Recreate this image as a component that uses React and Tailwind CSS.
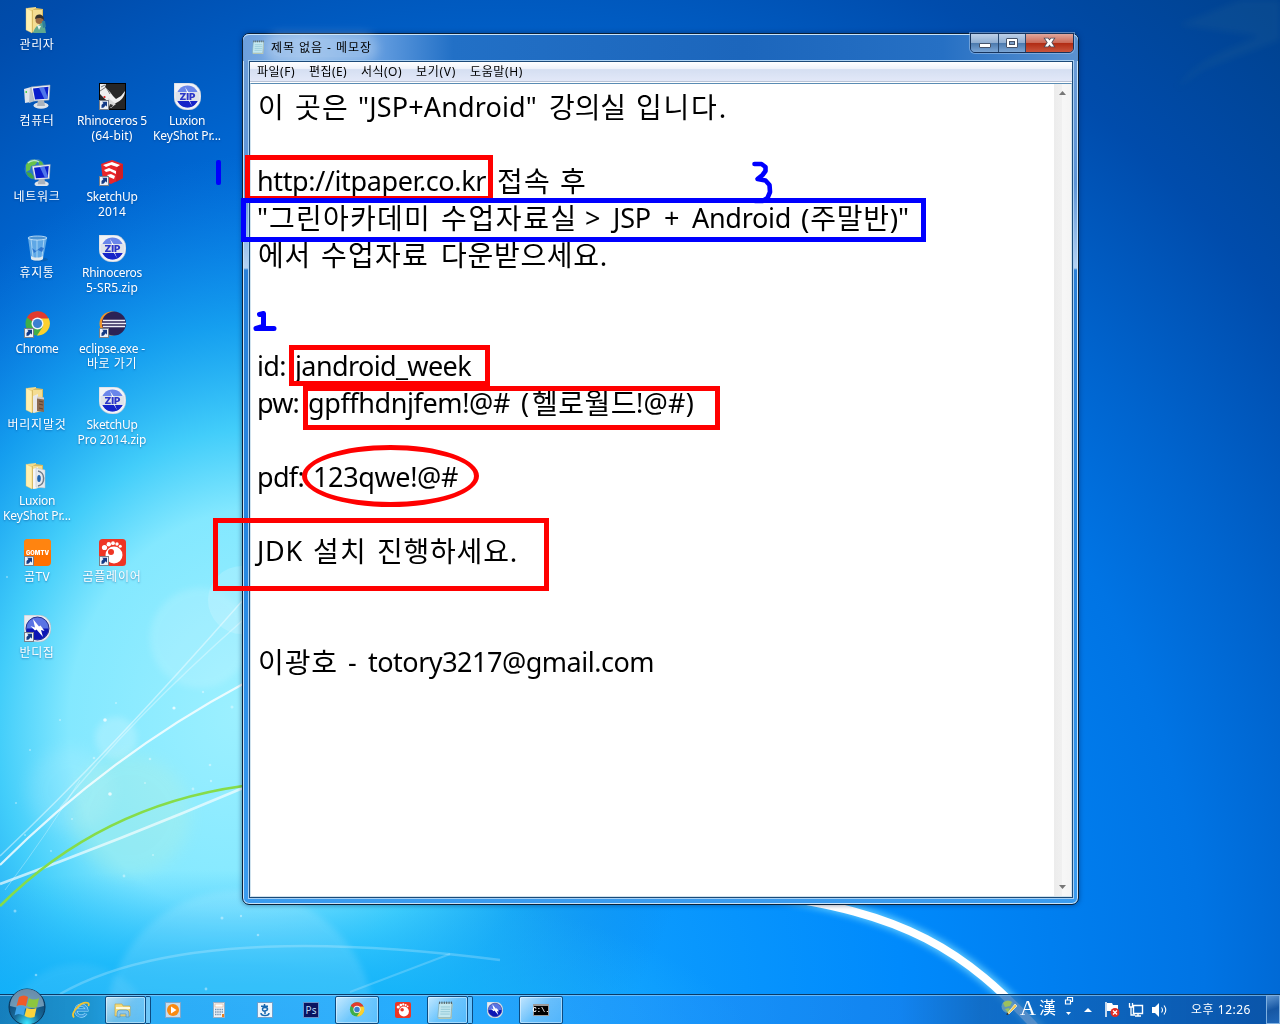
import { useLayoutEffect, useRef } from "react";

/* Text run whose letter spacing is adjusted to fill a given width. */
function Run({ w, children, className = "" }) {
  const ref = useRef(null);
  useLayoutEffect(() => {
    const el = ref.current;
    el.style.letterSpacing = "0px";
    const natural = el.getBoundingClientRect().width;
    el.style.letterSpacing = (w - natural) / Math.max(1, [...children].length) + "px";
  }, [w, children]);
  return (
    <span className={"inline-block whitespace-pre " + className}>
      <span ref={ref} className="inline-block">{children}</span>
    </span>
  );
}

function Shortcut() {
  return (
    <g>
      <rect x="0.5" y="17.5" width="9" height="9" fill="#eef2f8" stroke="#7a7f88" />
      <path d="M2.500 25v-3l2-2-1.500-1.200h5v5L6.700 22.300 4.800 24.500z" fill="#123a86" />
    </g>
  );
}

function Svg({ children, size = 27 }) {
  return <svg width={size} height={size} viewBox="0 0 27 27" className="block">{children}</svg>;
}

function FolderIcon({ kind }) {
  return (
    <Svg>
      <path d="M3 1l9-1v3h6v21l-8 2z" fill="#f3dc8b" />
      <path d="M7 4l5-3 7 1v20l-12 4z" fill="#d9bb62" />
      <path d="M9 3l9 0v19l-9 3z" fill="#f4dd92" />
      <path d="M2 1l6 3v22l-6-3z" fill="#fff0b0" stroke="#d8be6c" strokeWidth=".4" />
      {kind === "user" && (
        <g>
          <circle cx="15.500" cy="13" r="4" fill="#9a6a44" />
          <path d="M11 12c0-6 9-6 9 1-3-3-6-2-9-1z" fill="#33302c" />
          <path d="M9 26c1-4 3-7 6-8l5-4 2 12z" fill="#5fa890" />
          <path d="M18 14l3 0 1 6-3 1z" fill="#2f7f9c" />
          <path d="M13 18l2 5 2-4z" fill="#e8f4f0" />
        </g>
      )}
      {kind === "photo" && (
        <g>
          <path d="M9 9l5-2v17l-5 2z" fill="#e9e9ea" />
          <path d="M13 10l7 1v14l-7-1z" fill="#8b6a52" />
          <path d="M13 9.500l7 1v2l-7-1z" fill="#d8d0c8" />
          <path d="M15 14l4 1M15 17l4 1M15 21l4 1" stroke="#5f4433" />
        </g>
      )}
      {kind === "disc" && (
        <g>
          <path d="M9 6l5-2v21l-5 1z" fill="#f4f5f7" />
          <path d="M12 5l9 2v18l-9-1z" fill="#e6eaee" stroke="#b8c0c8" strokeWidth=".5" />
          <path d="M14 8c7 1 8 13 0 15" fill="none" stroke="#6f7d8c" strokeWidth="1.500" />
          <ellipse cx="15" cy="15.500" rx="1.800" ry="3.500" fill="#1f63ae" />
        </g>
      )}
    </Svg>
  );
}

function Monitor({ x = 6 }) {
  return (
    <g transform={`translate(${x} 2)`}>
      <ellipse cx="11" cy="20.500" rx="7.500" ry="3.300" fill="#dfe4ea" />
      <path d="M8 15h6l1 6H7z" fill="#aab3bd" />
      <path d="M1 2l19-2-1 15L4 16z" fill="#eef2f6" stroke="#a0a8b2" strokeWidth=".6" />
      <path d="M3 3.500l15.500-1.800-1 12L5 14.500z" fill="#0a1ecc" />
      <path d="M9 2.800l5-.6L17.500 12l-.2 1.700-3 .2z" fill="#5f8cf4" opacity=".8" />
    </g>
  );
}

function ComputerIcon() {
  return (
    <Svg>
      <path d="M0 6l7-2v15l-6 1z" fill="#dfe4ea" />
      <path d="M6 4l5 1v13l-6 2z" fill="#b9c2cc" />
      <rect x="1.500" y="8" width="1.500" height="2" fill="#4fd04f" />
      <Monitor />
    </Svg>
  );
}

function NetworkIcon() {
  return (
    <Svg>
      <circle cx="11" cy="10" r="10.500" fill="#2a78c8" />
      <path d="M2 6c3-6 9-6 12-4l-3 4-4 1-1 4-4 2z" fill="#67c24a" />
      <path d="M14 1l4 2 2 4-5-1z" fill="#5cb848" />
      <path d="M2 13l5 1 3 4-1 2c-4-1-6-4-7-7z" fill="#3fa648" />
      <path d="M4 4c3-3 8-3 11-1" stroke="#dff5ff" strokeWidth="1.500" fill="none" opacity=".7" />
      <g transform="translate(1.500 3.500) scale(.95)"><Monitor /></g>
    </Svg>
  );
}

function TrashIcon() {
  return (
    <Svg>
      <ellipse cx="16" cy="24.500" rx="8" ry="2" fill="#0a4f92" opacity=".45" />
      <path d="M4 3l3 21c2 2 10 2 12 0l4-21z" fill="#7fbdec" opacity=".75" />
      <path d="M7 4l2 18M20 4l-2 18M13 5v18" stroke="#d6efff" strokeWidth="1" opacity=".6" />
      <path d="M8 13l4 3 5-4 3 1-2 4-4-2-4 3z" fill="#2168c8" opacity=".8" />
      <path d="M7 21c3 2 9 2 12 0v3c-2 2-10 2-12 0z" fill="#dfe8ee" />
      <ellipse cx="13.500" cy="3" rx="9.500" ry="2" fill="#4c94d4" stroke="#d4ecfc" strokeWidth=".8" />
    </Svg>
  );
}

function ZipIcon() {
  return (
    <Svg>
      <path d="M0 0h15c7 0 12 6 12 13 0 8-5 14-13 14C5 27 0 21 0 14z" fill="#f1f3f7" stroke="#b9bfca" strokeWidth=".6" />
      <circle cx="13.500" cy="13.500" r="11" fill="#6a86ea" />
      <path d="M2.500 13.500a11 11 0 0 0 22 0z" fill="#1624c8" />
      <rect x="1.500" y="9" width="24" height="9" fill="#dfe3ea" />
      <path d="M11 4l4 6-2 1 5 12-6-10 2-1z" fill="#fff" />
      <text x="13.500" y="16.800" textAnchor="middle" fontSize="9" fontWeight="900" fontFamily="Inter, sans-serif" textLength="16" lengthAdjust="spacingAndGlyphs" fill="#2b35c8">ZIP</text>
    </Svg>
  );
}

function BandiIcon({ shortcut, size }) {
  return (
    <Svg size={size}>
      <path d="M0 0h14c8 0 13 6 13 13 0 8-5 14-13 14C5 27 0 22 0 14z" fill="#e9ecf2" stroke="#a8b0be" strokeWidth=".6" />
      <circle cx="13.500" cy="13.500" r="11.500" fill="#5a74e4" stroke="#26308a" />
      <path d="M2.500 13.500a11 11 0 0 0 22 0z" fill="#0d16b4" />
      <path d="M9 4l6 7.500 1.500-1L20.500 16l-3.500-1 2 7-6.500-7.500-1.500 1L6.500 11l4.500 1.500z" fill="#fff" />
      {shortcut && <Shortcut />}
    </Svg>
  );
}

function RhinoIcon() {
  return (
    <Svg>
      <rect x=".5" y=".5" width="26" height="26" fill="#262626" stroke="#000" />
      <path d="M1 1l6 0-1 3 5 5 3 4 3 3 5-3 4-5c0 5-4 10-9 12l-5 1-2-2-4-3-5-5z" fill="#efefef" />
      <path d="M2 4l4-2M1 8l6-4M8 6l3 5" stroke="#777" />
      <path d="M9 15l8 6-5 4-3-3z" fill="#d8d8d8" />
      <circle cx="5.500" cy="14" r="1.100" fill="#e02020" />
      <path d="M11 21l3 1-1 2h-3z" fill="#333" />
      <Shortcut />
    </Svg>
  );
}

function SketchUpIcon() {
  return (
    <Svg>
      <path d="M2 5L13 1l11 4v14l-12 6-8-3z" fill="#e9262b" />
      <path d="M18 8l6-3v14l-7 4z" fill="#d01e24" />
      <path d="M4 6l9-3 8 3-3 2-6-2-5 2zM5 11l5-2 7 3v3l-6-3-4 1zM8 16l4-1 4 2-1 3-5-2z" fill="#fff" />
      <Shortcut />
    </Svg>
  );
}

function ChromeIcon({ shortcut, size }) {
  return (
    <Svg size={size}>
      <circle cx="13.500" cy="12.500" r="12" fill="#3fae49" />
      <path d="M13.500 7H24.500A12 12 0 0 1 13 24.500l6-9z" fill="#fcd02f" />
      <path d="M3 6.500a12 12 0 0 1 21.500 1H13.500l-5 3z" fill="#e23a2e" />
      <circle cx="13.500" cy="12.500" r="6" fill="#f2f4f5" />
      <circle cx="13.500" cy="12.500" r="4.600" fill="#3a7fd0" />
      {shortcut && <Shortcut />}
    </Svg>
  );
}

function EclipseIcon() {
  return (
    <Svg>
      <circle cx="12.500" cy="12.500" r="12" fill="#f0952b" />
      <circle cx="15" cy="12.500" r="12" fill="#2c2255" />
      <path d="M4 9.500h22M3 12.500h24M4 15.500h22" stroke="#eeedf6" strokeWidth="1.700" />
      <Shortcut />
    </Svg>
  );
}

function GomTvIcon() {
  return (
    <Svg>
      <rect width="27" height="27" rx="4" fill="#ff7000" />
      <path d="M0 4a4 4 0 0 1 4-4h19a4 4 0 0 1 4 4v7H0z" fill="#ff8410" />
      <text x="13.500" y="15.800" textAnchor="middle" fontSize="5.500" fontWeight="900" fontFamily="Inter, sans-serif" textLength="23" lengthAdjust="spacingAndGlyphs" fill="#fff">GOMTV</text>
      <Shortcut />
    </Svg>
  );
}

function GomIcon({ shortcut, size }) {
  return (
    <Svg size={size}>
      <rect width="27" height="27" rx="3.500" fill="#ee3524" />
      <circle cx="15" cy="16" r="8.500" fill="#fff" />
      <circle cx="12" cy="13" r="3" fill="#ee3524" />
      <circle cx="5.500" cy="8.500" r="2.600" fill="#fff" />
      <circle cx="9.800" cy="5.200" r="2.200" fill="#fff" />
      <circle cx="14" cy="4.200" r="1.900" fill="#fff" />
      <circle cx="18" cy="5" r="1.700" fill="#fff" />
      <circle cx="21.300" cy="7.200" r="1.500" fill="#fff" />
      {shortcut && <Shortcut />}
    </Svg>
  );
}

function NotepadIcon({ size = 16 }) {
  return (
    <svg width={size} height={size} viewBox="0 0 16 16" className="block">
      <path d="M3 2h11l-1 13H2z" fill="#d9cf9c" />
      <path d="M2.500 1.500h11l-1 12.500h-11z" fill="#c4e8f0" stroke="#7fa9b4" strokeWidth=".6" />
      <path d="M4 5h8M4 7h8M3.800 9h8M3.600 11h8" stroke="#8cc4d4" strokeWidth=".7" />
      <path d="M3 .5v2M5 .5v2M7 .5v2M9 .5v2M11 .5v2M13 .5v2" stroke="#4c5458" strokeWidth=".8" />
    </svg>
  );
}

const desktop = [
  ["col-start-1 row-start-1", <FolderIcon kind="user" />, [["관리자", 35]]],
  ["col-start-1 row-start-2", <ComputerIcon />, [["컴퓨터", 35]]],
  ["col-start-2 row-start-2", <RhinoIcon />, [["Rhinoceros 5", 70], ["(64-bit)", 41]]],
  ["col-start-3 row-start-2", <ZipIcon />, [["Luxion", 36], ["KeyShot Pr...", 68]]],
  ["col-start-1 row-start-3", <NetworkIcon />, [["네트워크", 47]]],
  ["col-start-2 row-start-3", <SketchUpIcon />, [["SketchUp", 51], ["2014", 28]]],
  ["col-start-1 row-start-4", <TrashIcon />, [["휴지통", 35]]],
  ["col-start-2 row-start-4", <ZipIcon />, [["Rhinoceros", 60], ["5-SR5.zip", 52]]],
  ["col-start-1 row-start-5", <ChromeIcon shortcut />, [["Chrome", 43]]],
  ["col-start-2 row-start-5", <EclipseIcon />, [["eclipse.exe -", 66], ["바로 가기", 50]]],
  ["col-start-1 row-start-6", <FolderIcon kind="photo" />, [["버리지말것", 59]]],
  ["col-start-2 row-start-6", <ZipIcon />, [["SketchUp", 51], ["Pro 2014.zip", 69]]],
  ["col-start-1 row-start-7", <FolderIcon kind="disc" />, [["Luxion", 36], ["KeyShot Pr...", 68]]],
  ["col-start-1 row-start-8", <GomTvIcon />, [["곰TV", 26]]],
  ["col-start-2 row-start-8", <GomIcon shortcut />, [["곰플레이어", 59]]],
  ["col-start-1 row-start-9", <BandiIcon shortcut />, [["반디집", 35]]],
];

/* Each line lists [left gap, width, text]. */
const lines = [
  [[0, 28, "이"], [9, 54, "곳은"], [10, 179, "\"JSP+Android\""], [11, 77, "강의실"], [10, 92, "입니다."]],
  [],
  [[0, 229, "http://itpaper.co.kr"], [10, 90, "접속 후"]],
  [[0, 10, "\""], [1, 162, "그린아카데미"], [10, 137, "수업자료실"], [8, 17, ">"], [11, 38, "JSP"], [13, 19, "+"], [9, 99, "Android"], [9, 98, "(주말반)"], [0, 10, "\""]],
  [[0, 53, "에서"], [10, 108, "수업자료"], [12, 167, "다운받으세요."]],
  [],
  [],
  [[0, 29, "id:"], [9, 176, "jandroid_week"]],
  [[0, 42, "pw:"], [9, 202, "gpffhdnjfem!@#"], [11, 10, "("], [0, 105, "헬로월드"], [0, 58, "!@#)"]],
  [],
  [[0, 47, "pdf:"], [9, 145, "123qwe!@#"]],
  [],
  [[0, 46, "JDK"], [9, 54, "설치"], [10, 141, "진행하세요."]],
  [],
  [],
  [[0, 80, "이광호"], [11, 12, "-"], [8, 286, "totory3217@gmail.com"]],
];

const stars = [
  [105, 720, 1.8], [174, 708, 1.6], [110, 794, 1.8], [150, 759, 1.3], [210, 765, 1.3], [94, 758, 1.3], [193, 789, 1.4],
  [116, 703, 1], [30, 750, 1], [16, 803, 1], [72, 819, 1], [25, 835, 1], [51, 851, 1], [124, 876, 1.4],
  [203, 692, 1.2], [232, 707, 1.5], [15, 911, 1.5], [222, 918, 1.5], [241, 916, 1.2], [258, 935, 1.3],
  [36, 975, 1.3], [60, 720, 1], [153, 855, 1], [206, 989, 1.4], [145, 783, 1], [7, 577, 1], [211, 781, 1.2],
];

function Wallpaper() {
  return (
    <svg width="1280" height="1024" className="absolute inset-0">
      <defs>
        <radialGradient id="base" gradientUnits="userSpaceOnUse" cx="0" cy="0" r="1.350" gradientTransform="translate(500 1000) scale(900 1000)">
          <stop offset="0" stopColor="#12a4ff" /><stop offset=".33" stopColor="#008afc" /><stop offset=".58" stopColor="#0074e4" />
          <stop offset=".68" stopColor="#0064ce" /><stop offset=".82" stopColor="#004cac" /><stop offset="1" stopColor="#00408a" />
        </radialGradient>
        <radialGradient id="glow" gradientUnits="userSpaceOnUse" cx="0" cy="0" r="1" gradientTransform="translate(240 710) rotate(12) scale(500 590)">
          <stop offset="0" stopColor="#9cf0ff" /><stop offset=".34" stopColor="#86eaff" stopOpacity=".98" />
          <stop offset=".48" stopColor="#48d4fb" stopOpacity=".92" /><stop offset=".66" stopColor="#1cacf2" stopOpacity=".75" /><stop offset=".95" stopColor="#1080e0" stopOpacity="0" />
        </radialGradient>
        <radialGradient id="low" gradientUnits="userSpaceOnUse" cx="0" cy="0" r="1" gradientTransform="translate(200 1060) scale(560 190)">
          <stop offset="0" stopColor="#06aef8" /><stop offset=".5" stopColor="#12b4fa" stopOpacity=".8" /><stop offset="1" stopColor="#20b8ff" stopOpacity="0" />
        </radialGradient>
        <filter id="soft"><feGaussianBlur stdDeviation="3" /></filter>
        <filter id="haze" x="-30%" y="-30%" width="160%" height="160%"><feGaussianBlur stdDeviation="8" /></filter>
        <filter id="soft1"><feGaussianBlur stdDeviation=".7" /></filter>
      </defs>
      <rect width="1280" height="1024" fill="url(#base)" />
      <rect width="1280" height="1024" fill="url(#glow)" />
      <rect y="850" width="1280" height="174" fill="url(#low)" />
      <path d="M1178 25l62-25h40v40l-78 30-25 18c20-30 55-40 82-52z" fill="#1a5c94" opacity=".3" filter="url(#soft)" />
      <g fill="#fff">
        <circle cx="70" cy="790" r="42" opacity=".1" filter="url(#haze)" />
        <circle cx="116" cy="738" r="21" opacity=".2" filter="url(#soft)" />
        <circle cx="200" cy="638" r="50" opacity=".14" filter="url(#soft)" />
        <circle cx="242" cy="600" r="34" opacity=".16" filter="url(#soft1)" />
        <circle cx="130" cy="815" r="60" fill="#e8f8b0" opacity=".13" filter="url(#haze)" />
        <circle cx="240" cy="1024" r="134" opacity=".12" filter="url(#soft)" />
        <circle cx="78" cy="1040" r="76" opacity=".07" filter="url(#soft)" />
      </g>
      <g fill="none" stroke="#fff" filter="url(#soft1)">
        <path d="M0 865Q110 755 243 684" strokeWidth="2.200" opacity=".8" />
        <path d="M0 856Q110 752 243 600" strokeWidth="1.500" opacity=".45" />
        <path d="M60 808Q130 720 243 620" strokeWidth="1.500" opacity=".35" />
        <path d="M0 884Q120 840 243 788" strokeWidth="2.600" opacity=".65" />
        <path d="M5 890Q50 830 80 780" strokeWidth="1" opacity=".3" />
        <path d="M60 994Q190 920 500 960" strokeWidth="2.400" opacity=".22" />
        <path d="M350 992l100-38" strokeWidth="2" opacity=".2" />
        <path d="M0 906Q100 806 243 786" stroke="#86dc48" strokeWidth="2.600" />
      </g>
      <path d="M760 893C900 910 965 950 1040 1030" fill="none" stroke="#70d4ff" strokeWidth="13" filter="url(#soft)" opacity=".8" />
      <path d="M760 894C905 912 965 950 1038 1030" fill="none" stroke="#fff" strokeWidth="8" filter="url(#soft1)" />
      {stars.map(([x, y, r]) => <circle key={x + "-" + y} cx={x} cy={y} r={r} fill="#fff" opacity={r > 1.55 ? 0.75 : 0.4} />)}
    </svg>
  );
}

function Desktop() {
  return (
    <div className="absolute left-0 top-0 grid grid-cols-[75px_75px_75px] auto-rows-[76px] pt-[7px] text-[12px] leading-[15px] text-white">
      {desktop.map(([pos, icon, label], i) => (
        <div key={i} className={"flex flex-col items-center " + pos}>
          {icon}
          <div className="mt-[3px] -ml-px flex flex-col items-center [text-shadow:0_1px_2px_#003a8088]">
            {label.map(([t, w]) => <Run key={t} w={w}>{t}</Run>)}
          </div>
        </div>
      ))}
    </div>
  );
}

function WindowButtons() {
  return (
    <div className="-mt-px flex h-[20px] w-[104px] overflow-hidden rounded-b-[5px] border border-[#16335c] shadow-[0_0_0_1px_#b9d3f077]">
      <div className="flex w-[28px] items-center justify-center border-r border-[#26466f] bg-[linear-gradient(#bdd0e8,#8faed2_48%,#4a78ac_50%,#7ba6d6)]">
        <div className="mt-[5px] h-[5px] w-[12px] rounded-[1px] border border-[#45536a] bg-white" />
      </div>
      <div className="flex w-[27px] items-center justify-center border-r border-[#26466f] bg-[linear-gradient(#bdd0e8,#8faed2_48%,#4a78ac_50%,#7ba6d6)]">
        <div className="-mt-px flex h-[10px] w-[12px] items-center justify-center rounded-[1px] border border-[#45536a] bg-white">
          <div className="h-[4px] w-[6px] border border-[#45536a] bg-[#7d9fc8]" />
        </div>
      </div>
      <div className="flex flex-1 items-center justify-center bg-[linear-gradient(#e0a79c,#cb6a58_48%,#b02a12_50%,#c9553c)]">
        <svg width="13" height="11" viewBox="0 0 13 11" className="-mt-[2px]">
          <path d="M2 1.500h3L6.500 3.500 8 1.500h3L8.300 5.500 11 9.500H8L6.500 7.500 5 9.500H2l2.700-4z" stroke="#4d4a58" strokeWidth="1.600" fill="#fff" paintOrder="stroke" />
        </svg>
      </div>
    </div>
  );
}

function Notepad() {
  return (
    <div className="absolute left-[242px] top-[33px] flex h-[872px] w-[837px] flex-col rounded-[7px] border border-[#0b2038] bg-[linear-gradient(#6d9ed8,#5c94d8_150px,#b4d2f4_234px,#2a80d8_236px,#2486e0_500px,#3a9cf0)] shadow-[inset_0_0_0_1px_#c8e4fa,0_0_5px_#00205088]">
      <div className="flex h-[27px] justify-between rounded-t-[6px] bg-[linear-gradient(90deg,#6c9fdc,#86b4e8_60px,#5f9ade_140px,#2270c6_210px,#1c66bc_500px,#2670c4_700px,#5b92d0)] pr-[4px] pl-[5px] shadow-[inset_0_1px_0_#c8e4fa]">
        <div className="flex items-center gap-[5px] pl-[3px] text-[12px] text-black">
          <NotepadIcon size={15} />
          <span className="rounded-full bg-white/25 shadow-[0_0_10px_6px_#ffffff40]"><Run w={101}>제목 없음 - 메모장</Run></span>
        </div>
        <WindowButtons />
      </div>
      <div className="mr-[5px] mb-[6px] ml-[6px] flex min-h-0 flex-1 flex-col border border-[#1c4a78] bg-white shadow-[0_0_0_1px_#a9d0f2]">
        <div className="flex h-[20px] items-center border-b border-[#b9c3d6] bg-[linear-gradient(#fff,#eef2fa_35%,#d5dff2_40%,#e2e8f8)] pl-[7px] text-[12px] text-black">
          <Run w={38}>파일(F)</Run>
          <Run w={38} className="ml-[14px]">편집(E)</Run>
          <Run w={41} className="ml-[14px]">서식(O)</Run>
          <Run w={40} className="ml-[14px]">보기(V)</Run>
          <Run w={53} className="ml-[14px]">도움말(H)</Run>
        </div>
        <div className="mt-px flex min-h-0 flex-1 border border-[#cfe2ee] border-t-[#5a8cb4]">
          <div className="flex-1 pl-[7px] pt-[4px] text-[27px] leading-[37px] text-black">
            {lines.map((line, i) => (
              <div key={i} className="flex h-[37px]">
                {line.map(([gap, w, t], j) => (
                  <span key={j} className="flex">
                    <span style={{ width: gap }} />
                    <Run w={w} className={/[가-힣]/.test(t) ? "pt-px text-[28px]" : "-ml-px mr-px"}>{t}</Run>
                  </span>
                ))}
              </div>
            ))}
          </div>
          <div className="flex w-[17px] flex-col items-center justify-between bg-[linear-gradient(90deg,#ececec,#f0f0f0_45%,#f7f7f7_50%,#f4f4f4)] py-[7px]">
            <svg width="7" height="4"><path d="M0 4l3.500-4L7 4z" fill="#777" /></svg>
            <svg width="7" height="4"><path d="M0 0l3.500 4L7 0z" fill="#777" /></svg>
          </div>
        </div>
      </div>
    </div>
  );
}

function Annotations() {
  return (
    <>
      <div className="absolute left-[245px] top-[155px] h-[46px] w-[248px] border-[5px] border-[#f00]" />
      <div className="absolute left-[241px] top-[198px] h-[44px] w-[685px] border-[5px] border-[#00f]" />
      <div className="absolute left-[289px] top-[345px] h-[41px] w-[201px] border-[5px] border-[#f00]" />
      <div className="absolute left-[303px] top-[386px] h-[44px] w-[417px] border-[5px] border-[#f00]" />
      <div className="absolute left-[302px] top-[445px] h-[62px] w-[177px] rounded-[50%] border-[5px] border-[#f00]" />
      <div className="absolute left-[213px] top-[518px] h-[73px] w-[336px] border-[5px] border-[#f00]" />
      <div className="absolute left-[216px] top-[160px] h-[25px] w-[5px] rounded-[2px] bg-[#00f]" />
      <svg className="absolute left-[250px] top-[308px]" width="30" height="26" fill="none" stroke="#00f" strokeWidth="5" strokeLinecap="round" strokeLinejoin="round">
        <path d="M9.500 6.500l4-1v13M6 20.500l5-1.500M6 20.500h18" />
      </svg>
      <svg className="absolute left-[748px] top-[157px]" width="30" height="50" fill="none" stroke="#00f" strokeWidth="4.600" strokeLinecap="round" strokeLinejoin="round">
        <path d="M6.500 7h7l4 3v4l-3 4-5 4 8 1.500 4 4.500.500 7-2.500 6-5 3H7" />
      </svg>
    </>
  );
}

function Task({ active, stacked, children }) {
  return (
    <div className="flex h-[30px] w-[46px] items-center justify-center px-px">
      <div className={active
        ? "flex h-[28px] flex-1 items-center justify-center rounded-[2px] border border-[#0c4a80] bg-[linear-gradient(135deg,#ffffffb8,#ffffff50_50%,#ffffff38)] shadow-[inset_0_0_0_1px_#ffffff70]"
        : "flex flex-1 items-center justify-center"}>
        <div className={stacked ? "mr-[5px]" : ""}>{children}</div>
      </div>
      {stacked && <div className="-mr-[2px] h-[28px] w-[5px] rounded-r-[2px] border border-l-0 border-[#0c4a80] bg-white/30" />}
    </div>
  );
}

function Taskbar() {
  return (
    <div className="absolute inset-x-0 bottom-0 flex h-[30px] border-t border-[#0b3a66] bg-[linear-gradient(90deg,#1678b4e0,#1c8cc8d0_90px,#2aa4f4a0_150px,#34a8ffa0_400px,#2090f8a0_700px,#1c80e8a0_900px,#1668bcc8_980px,#1262b4b8_1040px,#0c50a0d8)] shadow-[inset_0_1px_0_#8fd0ffaa]">
      <div className="flex w-[58px] justify-center pr-[4px]">
        <svg width="38" height="38" viewBox="0 0 38 38" className="-mt-[7px] shrink-0">
          <defs>
            <radialGradient id="orb" cx=".5" cy=".95" r=".9"><stop offset="0" stopColor="#38e4ff" /><stop offset=".4" stopColor="#186c9c" /><stop offset="1" stopColor="#0c3a66" /></radialGradient>
          </defs>
          <circle cx="19" cy="19" r="18" fill="url(#orb)" stroke="#0a3458" />
          <path d="M2 18a17 17 0 0 1 34 0q-17 5-34 0z" fill="#c8e0ee" opacity=".5" />
          <path d="M11 9q5-3 9 0l-2 9q-5-2-9.500 0z" fill="#ef5a28" />
          <path d="M21 10q5 3 10 0l-2 9q-5 2-10-1z" fill="#8cc63e" />
          <path d="M8.500 19q4-2 9 0l-2 8.500q-5-3-9 0z" fill="#3fa4ea" />
          <path d="M18.500 20q5 2 10 0l-2 9q-5 2-10-1z" fill="#fdd33c" />
        </svg>
      </div>
      <Task>
        <svg width="18" height="18" viewBox="0 0 18 18" fill="none">
          <path d="M14 12.500a5.500 5.500 0 1 1 .8-3.500H5" stroke="#a7e4ff" strokeWidth="3.200" />
          <path d="M14 12.500a5.500 5.500 0 1 1 .8-3.500H5" stroke="#3c9ce0" strokeWidth="2.200" />
          <path d="M2 16.500C-2 12 9 0 16 2c1 .4 1 2 .3 3" stroke="#f4c531" strokeWidth="1.800" />
        </svg>
      </Task>
      <Task active stacked>
        <svg width="18" height="16" viewBox="0 0 18 16">
          <path d="M1 2h7l1 2h7v10H1z" fill="#f4dc7c" stroke="#c8a848" strokeWidth=".7" />
          <path d="M2 5h14v2H2z" fill="#fffbe0" />
          <path d="M3 15v-4q0-3 3-3h6q3 0 3 3v4h-3v-3H6v3z" fill="#8cc8ec" stroke="#4f94c0" strokeWidth=".7" />
        </svg>
      </Task>
      <Task>
        <svg width="16" height="16" viewBox="0 0 16 16"><rect x=".5" y=".5" width="15" height="15" fill="#c6dced" stroke="#7fa8cc" /><circle cx="8" cy="8" r="6" fill="#fa8a10" /><path d="M6 4.500v7L11.500 8z" fill="#fff" /></svg>
      </Task>
      <Task>
        <svg width="12" height="16" viewBox="0 0 12 16"><rect x=".5" y=".5" width="11" height="15" fill="#eef3f8" stroke="#9ab0c4" /><rect x="2" y="2" width="8" height="3" fill="#fff" stroke="#e0a070" strokeWidth=".5" /><path d="M2 7.500h8M2 10h8M2 12.500h6" stroke="#7c98b4" strokeWidth="1.400" strokeDasharray="1.500 .7" /><path d="M9 12h2v3H9z" fill="#f0801c" /></svg>
      </Task>
      <Task>
        <svg width="16" height="16" viewBox="0 0 16 16"><rect x=".5" y=".5" width="15" height="15" fill="#eef6fc" stroke="#6fa0cc" /><path d="M4 4.200h7M7.500 2v2M5.500 7q0-1.500 2.500-1.500T10.500 7 8 9 5.500 7M8 9v3M4 11q0 2.500 4 2.500t4-2.500" stroke="#1668b0" strokeWidth="1.500" fill="none" /></svg>
      </Task>
      <Task>
        <div className="flex h-[16px] w-[16px] items-center justify-center border border-[#6a90c8] bg-[#0a1360] text-[10px] leading-none text-[#b8dcf8]">Ps</div>
      </Task>
      <Task active><ChromeIcon size={16} /></Task>
      <Task><GomIcon size={16} /></Task>
      <Task active stacked><NotepadIcon size={19} /></Task>
      <Task><BandiIcon size={16} /></Task>
      <Task active>
        <div className="flex h-[12px] w-[16px] items-center justify-center border border-t-2 border-[#9a9a9a] bg-black font-['Liberation_Mono',monospace] text-[7px] leading-none font-bold text-white">C:\.</div>
      </Task>
      <div className="flex flex-1 items-center justify-end text-white">
        <svg width="17" height="17" viewBox="0 0 17 17" className="-mt-[5px]"><circle cx="7" cy="7.500" r="6.500" fill="#5f98b8" /><path d="M2 4q4-4 9-1l-2 4-5 1zM4 10l4-1 2 4-3 1z" fill="#9cc05c" /><path d="M6 15L14 5l2 2-8 8z" fill="#f3c84c" stroke="#fff" strokeWidth=".6" /><path d="M5.500 16l.5-2.500 2 2z" fill="#222" /></svg>
        <span className="ml-[2px] -mt-[4px] font-['Liberation_Serif',serif] text-[22px] leading-[26px]">A</span>
        <span className="ml-[3px] -mt-[5px] font-['Noto_Sans_CJK_TC',sans-serif] text-[17px] leading-[26px]">漢</span>
        <svg className="ml-[8px] -mt-[6px]" width="10" height="20" viewBox="0 0 10 20" fill="none" stroke="#fff"><path d="M3.500 3V.5h5v4H7M1.500 3h5v4h-5z" strokeWidth="1.200" /><path d="M2 15h5l-2.500 3z" fill="#fff" stroke="none" /></svg>
        <svg className="ml-[10px]" width="8" height="4"><path d="M0 4l4-4 4 4z" fill="#fff" /></svg>
        <svg className="ml-[12px]" width="17" height="17" viewBox="0 0 17 17"><path d="M2 1v15" stroke="#fff" strokeWidth="1.500" /><path d="M3 2h5l1 2h5v6H3z" fill="#fff" /><circle cx="11" cy="11.500" r="4.500" fill="#e02c24" /><path d="M9 9.500l4 4M13 9.500l-4 4" stroke="#fff" strokeWidth="1.300" /></svg>
        <svg className="ml-[7px]" width="16" height="16" viewBox="0 0 16 16" fill="none" stroke="#fff"><path d="M5.500 3.500h9v8h-9zM7 14h6M10 12v2" strokeWidth="1.400" /><path d="M1.500 1v4h3V1M3 5v8h4" strokeWidth="1.300" /></svg>
        <svg className="ml-[8px]" width="16" height="16" viewBox="0 0 16 16" fill="none" stroke="#fff"><path d="M0 5h3l4-4v14l-4-4H0z" fill="#fff" stroke="none" /><path d="M9.500 5.500q2 2.500 0 5M12 3.500q3.500 4.500 0 9" strokeWidth="1.100" /></svg>
        <span className="mr-[15px] ml-[23px] text-[12px]"><Run w={60}>오후 12:26</Run></span>
        <div className="h-full w-[14px] border border-[#7fb0e0] bg-[linear-gradient(160deg,#8ab8e6aa,#1c58a0aa_50%,#2a70c0aa)]" />
      </div>
    </div>
  );
}

export default function App() {
  return (
    <div className="relative h-[1024px] w-[1280px] overflow-hidden bg-[#0064cc] font-['Noto_Sans','Noto_Sans_CJK_KR',sans-serif]">
      <Wallpaper />
      <Desktop />
      <Notepad />
      <Annotations />
      <Taskbar />
    </div>
  );
}
